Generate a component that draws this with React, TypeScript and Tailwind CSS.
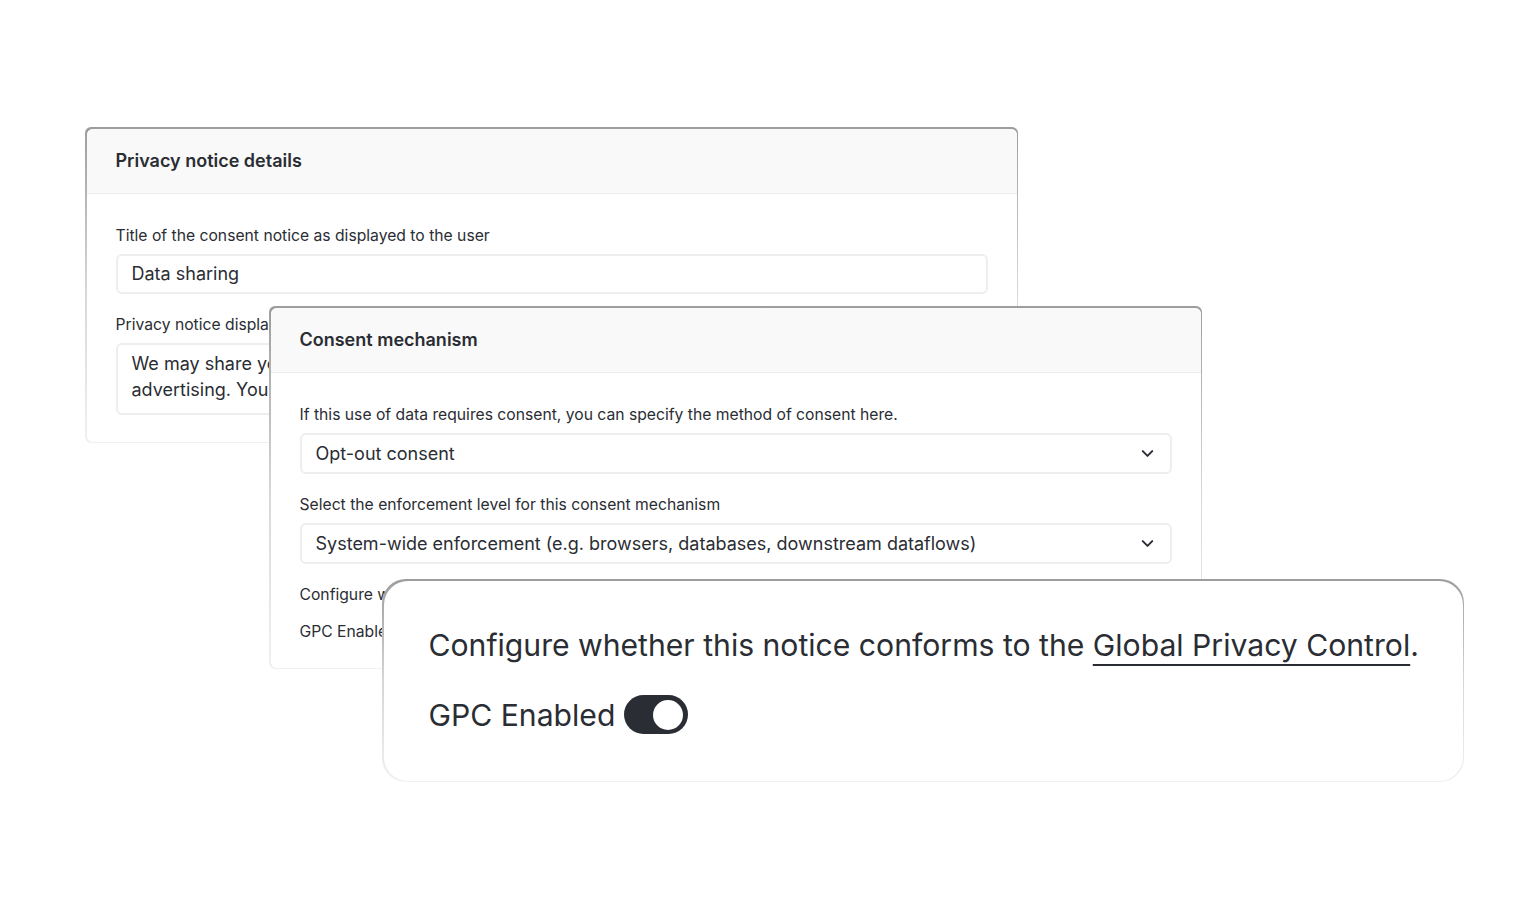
import { ChevronDown } from "lucide-react";

const font = { fontFamily: "Inter, 'Noto Sans', sans-serif" };

function Frame({
  className,
  radius,
  children,
}: {
  className: string;
  radius: string;
  children: React.ReactNode;
}) {
  return (
    <div
      className={`absolute bg-gradient-to-b from-[#9d9d9d] via-[#d6d6d6] to-[#f1f1f1] p-[1.5px] ${radius} ${className}`}
    >
      <div className={`h-full w-full overflow-hidden bg-white ${radius}`}>
        {children}
      </div>
    </div>
  );
}

function Header({ title }: { title: string }) {
  return (
    <div className="flex h-[65px] items-center border-b border-[#ececec] bg-[#f9f9f9] px-[29px]">
      <h2 className="text-[18px] font-semibold text-[#2a2d33]">{title}</h2>
    </div>
  );
}

function Label({ children }: { children: React.ReactNode }) {
  return (
    <p className="h-5 whitespace-nowrap text-[15.7px] leading-5 text-[#2a2d33]">{children}</p>
  );
}

function Select({ value }: { value: string }) {
  return (
    <div className="mt-2 flex h-[41px] items-center justify-between rounded-md border-2 border-[#eeeeee] pl-[14px] pr-[13px]">
      <span className="text-[18px] text-[#2a2d33]">{value}</span>
      <ChevronDown size={19} strokeWidth={2.5} className="text-[#2a2d33]" />
    </div>
  );
}

export default function App() {
  return (
    <div style={font} className="relative h-[900px] w-[1536px] overflow-hidden bg-white">

      {/* Privacy notice details */}

      <Frame className="left-[85px] top-[127px] h-[316px] w-[933px]" radius="rounded-md">
        <Header title="Privacy notice details" />
        <div className="px-[29px] pt-[32px]">
          <Label>Title of the consent notice as displayed to the user</Label>
          <div className="mt-2 flex h-[40px] items-center rounded-md border-2 border-[#eeeeee] px-[14px] text-[18px] text-[#2a2d33]">
            Data sharing
          </div>
          <div className="mt-[21px]">
            <Label>Privacy notice displayed to the user</Label>
          </div>
          <div className="mt-2 h-[72px] rounded-md border-2 border-[#eeeeee] px-[14px] pt-[6px] text-[18px] leading-[26px] text-[#2a2d33]">
            We may share your data with third parties for the purposes of
            <br />
            advertising. You can opt out of this at any time.
          </div>
        </div>
      </Frame>

      {/* Consent mechanism */}

      <Frame className="left-[269px] top-[306px] h-[363px] w-[933px]" radius="rounded-md">
        <Header title="Consent mechanism" />
        <div className="px-[29px] pt-[32px]">
          <Label>
            If this use of data requires consent, you can specify the method of consent here.
          </Label>
          <Select value="Opt-out consent" />
          <div className="mt-[21px]">
            <Label>Select the enforcement level for this consent mechanism</Label>
          </div>
          <Select value="System-wide enforcement (e.g. browsers, databases, downstream dataflows)" />
          <div className="mt-[21px]">
            <Label>Configure whether this notice conforms to the Global Privacy Control.</Label>
          </div>
          <p className="mt-[17px] text-[15.7px] leading-5 text-[#2a2d33]">GPC Enabled</p>
        </div>
      </Frame>

      {/* GPC zoom card */}

      <Frame className="left-[382px] top-[579px] h-[203px] w-[1082px]" radius="rounded-[24px]">
        <div className="px-[45px] pt-[44px] text-[#2a2d33]">
          <p className="whitespace-nowrap text-[30.15px] leading-[40px]">
            Configure whether this notice conforms to the{" "}
            <span className="underline decoration-2 underline-offset-[8px]">
              Global Privacy Control
            </span>
            .
          </p>
          <div className="mt-[30px] flex items-center gap-[9px]">
            <span className="text-[30.15px] leading-[40px]">GPC Enabled</span>
            <div className="flex h-[39px] w-[64px] items-center justify-end rounded-full bg-[#2a2d33] pr-[5px]">
              <div className="h-[30px] w-[30px] rounded-full bg-white" />
            </div>
          </div>
        </div>
      </Frame>

    </div>
  );
}
